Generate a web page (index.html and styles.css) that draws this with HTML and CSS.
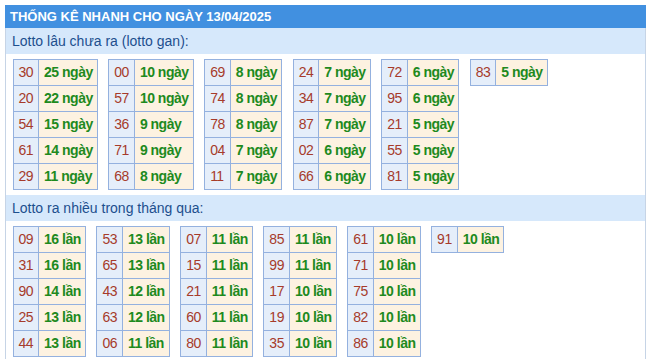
FILE: index.html
```html
<!DOCTYPE html>
<html lang="vi">
<head>
<meta charset="utf-8">
<link rel="stylesheet" href="styles.css">
</head>
<body>
<div class="wrap">
  <div class="title">THỐNG KÊ NHANH CHO NGÀY 13/04/2025</div>
  <div class="box">
    <div class="sub">Lotto lâu chưa ra (lotto gan):</div>
    <div class="tables">
      <table><tr><td class="n">30</td><td class="v">25 ngày</td></tr><tr><td class="n">20</td><td class="v">22 ngày</td></tr><tr><td class="n">54</td><td class="v">15 ngày</td></tr><tr><td class="n">61</td><td class="v">14 ngày</td></tr><tr><td class="n">29</td><td class="v">11 ngày</td></tr></table>
      <table><tr><td class="n">00</td><td class="v">10 ngày</td></tr><tr><td class="n">57</td><td class="v">10 ngày</td></tr><tr><td class="n">36</td><td class="v">9 ngày</td></tr><tr><td class="n">71</td><td class="v">9 ngày</td></tr><tr><td class="n">68</td><td class="v">8 ngày</td></tr></table>
      <table><tr><td class="n">69</td><td class="v">8 ngày</td></tr><tr><td class="n">74</td><td class="v">8 ngày</td></tr><tr><td class="n">78</td><td class="v">8 ngày</td></tr><tr><td class="n">04</td><td class="v">7 ngày</td></tr><tr><td class="n">11</td><td class="v">7 ngày</td></tr></table>
      <table><tr><td class="n">24</td><td class="v">7 ngày</td></tr><tr><td class="n">34</td><td class="v">7 ngày</td></tr><tr><td class="n">87</td><td class="v">7 ngày</td></tr><tr><td class="n">02</td><td class="v">6 ngày</td></tr><tr><td class="n">66</td><td class="v">6 ngày</td></tr></table>
      <table><tr><td class="n">72</td><td class="v">6 ngày</td></tr><tr><td class="n">95</td><td class="v">6 ngày</td></tr><tr><td class="n">21</td><td class="v">5 ngày</td></tr><tr><td class="n">55</td><td class="v">5 ngày</td></tr><tr><td class="n">81</td><td class="v">5 ngày</td></tr></table>
      <table><tr><td class="n">83</td><td class="v">5 ngày</td></tr></table>
    </div>
    <div class="sub">Lotto ra nhiều trong tháng qua:</div>
    <div class="tables">
      <table><tr><td class="n">09</td><td class="v">16 lần</td></tr><tr><td class="n">31</td><td class="v">16 lần</td></tr><tr><td class="n">90</td><td class="v">14 lần</td></tr><tr><td class="n">25</td><td class="v">13 lần</td></tr><tr><td class="n">44</td><td class="v">13 lần</td></tr></table>
      <table><tr><td class="n">53</td><td class="v">13 lần</td></tr><tr><td class="n">65</td><td class="v">13 lần</td></tr><tr><td class="n">43</td><td class="v">12 lần</td></tr><tr><td class="n">63</td><td class="v">12 lần</td></tr><tr><td class="n">06</td><td class="v">11 lần</td></tr></table>
      <table><tr><td class="n">07</td><td class="v">11 lần</td></tr><tr><td class="n">15</td><td class="v">11 lần</td></tr><tr><td class="n">21</td><td class="v">11 lần</td></tr><tr><td class="n">60</td><td class="v">11 lần</td></tr><tr><td class="n">80</td><td class="v">11 lần</td></tr></table>
      <table><tr><td class="n">85</td><td class="v">11 lần</td></tr><tr><td class="n">99</td><td class="v">11 lần</td></tr><tr><td class="n">17</td><td class="v">10 lần</td></tr><tr><td class="n">19</td><td class="v">10 lần</td></tr><tr><td class="n">35</td><td class="v">10 lần</td></tr></table>
      <table><tr><td class="n">61</td><td class="v">10 lần</td></tr><tr><td class="n">71</td><td class="v">10 lần</td></tr><tr><td class="n">75</td><td class="v">10 lần</td></tr><tr><td class="n">82</td><td class="v">10 lần</td></tr><tr><td class="n">86</td><td class="v">10 lần</td></tr></table>
      <table><tr><td class="n">91</td><td class="v">10 lần</td></tr></table>
    </div>
  </div>
</div>
</body>
</html>
```
FILE: styles.css
```css
html, body {
  margin: 0;
  padding: 0;
  background: #ffffff;
}
body {
  font-family: "Liberation Sans", Arial, sans-serif;
}
.wrap {
  margin: 5px 0 0 5px;
  width: 641px;
}
.title {
  background: #4190e0;
  color: #ffffff;
  font-weight: bold;
  font-size: 13px;
  height: 23px;
  line-height: 23px;
  padding-left: 5px;
}
.box {
  border-left: 1px solid #c6d4e6;
  border-right: 1px solid #c6d4e6;
}
.sub {
  background: #d6e8fb;
  color: #1d4f8e;
  font-size: 14px;
  height: 26px;
  line-height: 26px;
  padding-left: 6px;
}
.tables {
  display: flex;
  align-items: flex-start;
  gap: 10.6px;
  padding: 5px 0 5px 6.5px;
}
table {
  border-collapse: collapse;
  font-size: 14px;
}
td {
  border: 1px solid #94b1df;
  line-height: 15px;
  white-space: nowrap;
}
td.n {
  background: #e5eefa;
  color: #a63b2b;
  padding: 5px 5px;
  letter-spacing: -0.5px;
}
td.v {
  background: #fdf2e1;
  color: #1e8a1e;
  font-weight: bold;
  padding: 5px 4px 5px 5px;
  letter-spacing: -0.5px;
}
```
